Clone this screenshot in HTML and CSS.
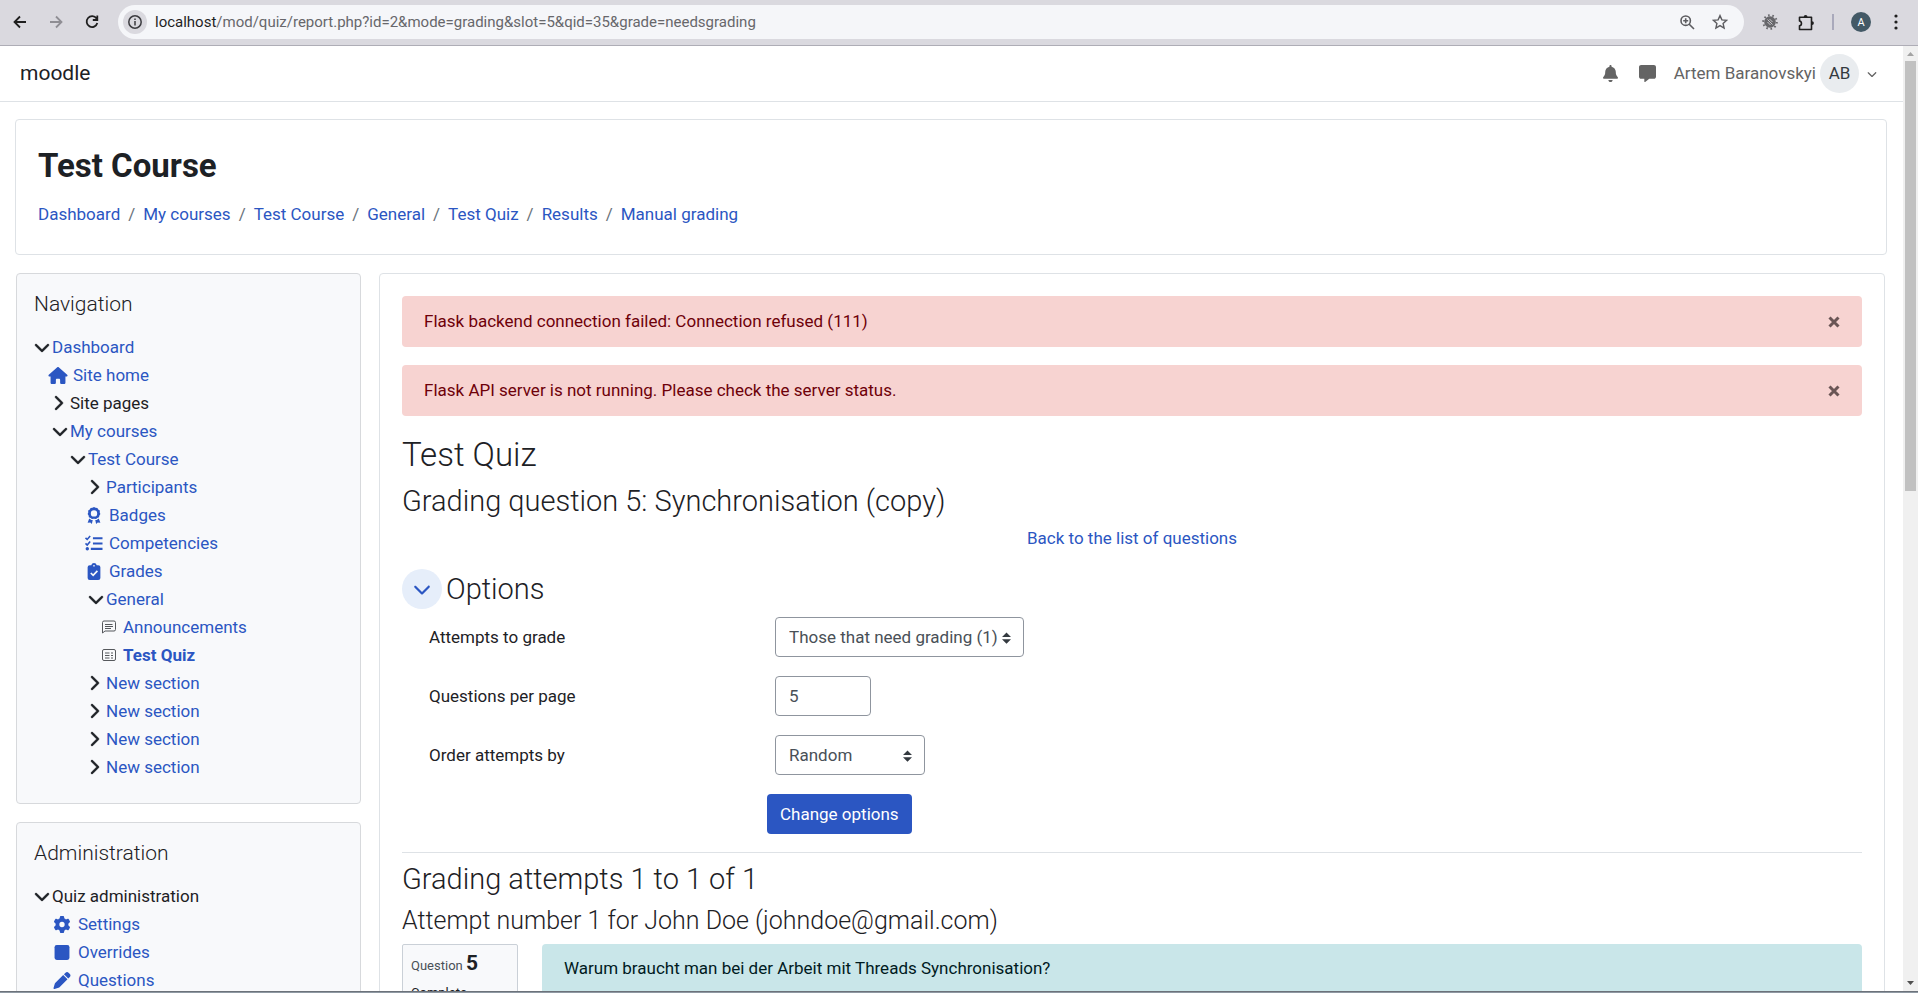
FILE: index.html
```html
<!DOCTYPE html>
<html lang="en">
<head>
<meta charset="utf-8">
<title>Test Quiz: Manual grading</title>
<link rel="stylesheet" href="styles.css">
</head>
<body>
<svg class="sprite" aria-hidden="true">
  <symbol id="down" viewBox="0 0 512 512"><path d="M233.4 406.6c12.5 12.5 32.8 12.5 45.3 0l192-192c12.5-12.5 12.5-32.8 0-45.3s-32.8-12.5-45.3 0L256 338.7 86.6 169.4c-12.5-12.5-32.8-12.5-45.3 0s-12.5 32.8 0 45.3l192 192z"/></symbol>
  <symbol id="right" viewBox="0 0 320 512"><path d="M310.6 233.4c12.5 12.5 12.5 32.8 0 45.3l-192 192c-12.5 12.5-32.8 12.5-45.3 0s-12.5-32.8 0-45.3L242.7 256 73.4 86.6c-12.5-12.5-12.5-32.8 0-45.3s32.8-12.5 45.3 0l192 192z"/></symbol>
  <symbol id="updown" viewBox="0 0 8 10"><path d="M4 0L8 4H0zM4 10L0 6h8z"/></symbol>
</svg>

<header class="toolbar">
  <button class="tool" aria-label="Back"><svg width="14" height="14" viewBox="0 0 14 14" fill="none" stroke="#1f1f1f" stroke-width="1.800"><path d="M13 7H2M7 1.500L1.500 7 7 12.500"/></svg></button>
  <button class="tool" aria-label="Forward"><svg width="14" height="14" viewBox="0 0 14 14" fill="none" stroke="#8f8e94" stroke-width="1.800"><path d="M1 7h11M7 1.500L12.500 7 7 12.500"/></svg></button>
  <button class="tool" aria-label="Reload"><svg width="14" height="14" viewBox="0 0 14 14" fill="none" stroke="#1f1f1f" stroke-width="1.800"><path d="M11.500 3.500A5.400 5.400 0 1 0 12.300 8M12.300 0.500v4.500h-4.500"/></svg></button>
  <div class="address">
    <button class="site-info" aria-label="View site information"><svg width="16" height="16" viewBox="0 0 16 16" fill="none" stroke="#3b3b3f" stroke-width="1.500"><circle cx="8" cy="8" r="6.200"/><path d="M8 7v4.500M8 4.500v1.500"/></svg></button>
    <div class="url" role="textbox" aria-label="Address"><span class="host">localhost</span>/mod/quiz/report.php?id=2&amp;mode=grading&amp;slot=5&amp;qid=35&amp;grade=needsgrading</div>
    <button class="tool-sm" aria-label="Zoom"><svg width="15" height="15" viewBox="0 0 15 15" fill="none" stroke="#5c5c60" stroke-width="1.600"><circle cx="5.700" cy="5.700" r="4.700"/><path d="M9 9l5 5M5.700 3.200v5M3.200 5.700h5"/></svg></button>
    <button class="tool-sm" aria-label="Bookmark"><svg width="16" height="16" viewBox="0 0 16 16" fill="none" stroke="#5c5c60" stroke-width="1.400"><path d="M8 1.600l1.900 4.300 4.700.4-3.500 3.100 1 4.600L8 11.600 3.900 14l1-4.600L1.400 6.300l4.700-.4z"/></svg></button>
  </div>
  <div class="extensions">
    <button class="tool-sm" aria-label="Extension"><svg width="16" height="16" viewBox="0 0 16 16"><circle cx="8" cy="8" r="5.800" fill="#67676b"/><circle cx="8" cy="8" r="6.800" fill="none" stroke="#67676b" stroke-width="2" stroke-dasharray="1.600 2.670"/><path d="M5.500 5.500l5 5M7.500 5l3 3M5.500 8l3 3" stroke="#c9c8cd" stroke-width="1"/></svg></button>
    <button class="tool-sm" aria-label="Extensions"><svg width="17" height="17" viewBox="0 0 17 17" fill="none" stroke="#1f1f1f" stroke-width="1.600"><path d="M1.500 3.300h12V15.500h-12v-3.700c2.600-.4 2.600-4.400 0-4.800z" stroke-linejoin="round"/><path d="M5.700 3a1.900 1.900 0 0 1 3.800 0zM14 7.200a1.900 1.900 0 0 1 0 3.800z" fill="#1f1f1f" stroke="none"/></svg></button>
    <span class="bar"></span>
    <button class="profile" aria-label="Profile A">A</button>
    <button class="tool-sm" aria-label="Menu"><svg width="4" height="16" viewBox="0 0 4 16" fill="#1f1f1f"><circle cx="2" cy="2" r="1.600"/><circle cx="2" cy="8" r="1.600"/><circle cx="2" cy="14" r="1.600"/></svg></button>
  </div>
</header>

<div class="viewport">
<div class="page">
  <nav class="navbar">
    <a class="brand" href="#">moodle</a>
    <div class="user">
      <button class="nav-icon" aria-label="Notifications"><svg width="15" height="17" viewBox="0 0 448 512" fill="#646464"><path d="M224 0c-17.700 0-32 14.300-32 32V51.200C119 66 64 130.600 64 208v18.800c0 47-17.300 92.400-48.500 127.600l-7.400 8.300c-8.400 9.400-10.400 22.900-5.300 34.400S19.400 416 32 416H416c12.600 0 24-7.400 29.200-18.900s3.100-25-5.300-34.400l-7.400-8.300C401.300 319.200 384 273.900 384 226.800V208c0-77.400-55-142-128-156.800V32c0-17.700-14.300-32-32-32zm45.300 493.300c12-12 18.700-28.300 18.700-45.300H224 160c0 17 6.700 33.300 18.700 45.300s28.300 18.700 45.300 18.700s33.300-6.700 45.300-18.700z"/></svg></button>
      <button class="nav-icon" aria-label="Messages"><svg width="17" height="17" viewBox="0 0 512 512" fill="#646464"><path d="M64 0C28.700 0 0 28.700 0 64V352c0 35.300 28.700 64 64 64h96v80c0 6.100 3.400 11.600 8.800 14.300s11.900 2.100 16.800-1.500L309.300 416H448c35.300 0 64-28.700 64-64V64c0-35.300-28.700-64-64-64H64z"/></svg></button>
      <button class="user-menu"><span>Artem Baranovskyi</span><span class="avatar">AB</span><svg width="10" height="10" viewBox="0 0 512 512" fill="#646464"><use href="#down"/></svg></button>
    </div>
  </nav>

  <section class="card page-header">
    <h1>Test Course</h1>
    <ol class="crumbs">
      <li><a href="#">Dashboard</a></li>
      <li><a href="#">My courses</a></li>
      <li><a href="#">Test Course</a></li>
      <li><a href="#">General</a></li>
      <li><a href="#">Test Quiz</a></li>
      <li><a href="#">Results</a></li>
      <li><a href="#">Manual grading</a></li>
    </ol>
  </section>

  <div class="columns">
    <aside class="sidebar">
      <section class="card block">
        <h5>Navigation</h5>
        <ul class="tree">
          <li><div class="row"><svg class="chev"><use href="#down"/></svg><a href="#">Dashboard</a></div>
            <ul>
              <li><div class="row leaf"><svg class="icon" viewBox="0 0 576 512"><path d="M575.800 255.500c0 18-15 32.100-32 32.100h-32l.7 160.200c0 2.700-.2 5.400-.5 8.100V472c0 22.100-17.900 40-40 40H392c-22.100 0-40-17.900-40-40V384c0-17.700-14.300-32-32-32H256c-17.700 0-32 14.300-32 32v88c0 22.100-17.900 40-40 40H104c-22.100 0-40-17.900-40-40V287.600H32c-18 0-32-14-32-32.100c0-9 3-17 10-24L266.400 8c7-7 15-8 22-8s15 2 21 7L564.800 231.500c8 7 12 15 11 24z"/></svg><a href="#">Site home</a></div></li>
              <li><div class="row"><svg class="chev side"><use href="#right"/></svg><span>Site pages</span></div></li>
              <li><div class="row"><svg class="chev"><use href="#down"/></svg><a href="#">My courses</a></div>
                <ul>
                  <li><div class="row"><svg class="chev"><use href="#down"/></svg><a href="#">Test Course</a></div>
                    <ul>
                      <li><div class="row"><svg class="chev side"><use href="#right"/></svg><a href="#">Participants</a></div></li>
                      <li><div class="row leaf"><svg class="icon" viewBox="0 0 16 16"><path fill-rule="evenodd" d="M8 0l1.500.8 1.700.1.800 1.500 1.500 1-.1 1.700.6 1.400-.9 1.500-.4 1.600-1.600.7L10 11.400 8 11l-2 .4-1.200-1.100-1.600-.7-.3-1.600L2 6.500l.6-1.400-.1-1.700 1.500-1 .8-1.500L6.500.8zM8 3a3 3 0 1 0 0 6 3 3 0 0 0 0-6z"/><path d="M3.500 10.800l2 1.400h1.300L6 16l-1.500-1.400-2.500.2zM12.500 10.800l-2 1.400H9.200L10 16l1.500-1.400 2.500.2z"/></svg><a href="#">Badges</a></div></li>
                      <li><div class="row leaf"><svg class="icon" viewBox="0 0 16 16"><path d="M0 2.700l1.600 1.500L4.400 1M0 7.900l1.600 1.500 2.800-3.200" fill="none" stroke="#2b56c2" stroke-width="1.500"/><path d="M7 2h9v2H7zM7 7h9v2H7zM5 12h11v2H5z"/><circle cx="1.700" cy="13" r="1.600"/></svg><a href="#">Competencies</a></div></li>
                      <li><div class="row leaf"><svg class="icon" viewBox="0 0 16 16"><path d="M4 2h1.400a2.700 2.700 0 0 1 5.200 0H12a2 2 0 0 1 2 2v10a2 2 0 0 1-2 2H4a2 2 0 0 1-2-2V4a2 2 0 0 1 2-2z"/><circle cx="8" cy="2.600" r=".8" fill="#f8f9fb"/><path d="M5 9.400l2.200 2.200L11.200 7.400" fill="none" stroke="#f8f9fb" stroke-width="1.600"/></svg><a href="#">Grades</a></div></li>
                      <li><div class="row"><svg class="chev"><use href="#down"/></svg><a href="#">General</a></div>
                        <ul>
                          <li><div class="row activity"><svg class="mod" viewBox="0 0 14 14"><path d="M.5 13V2.500a1.500 1.500 0 0 1 1.500-1.500h10a1.500 1.500 0 0 1 1.500 1.500v7a1.500 1.500 0 0 1-1.500 1.500H3zM3 4.500h7.500M3 6.500h8M3 8.500h6"/></svg><a href="#">Announcements</a></div></li>
                          <li><div class="row activity"><svg class="mod" viewBox="0 0 14 14"><rect x=".5" y="1.500" width="13" height="11" rx="1.500"/><path d="M3 5h4.500M3 7.500h4.500M3 10h4.500M9 5h2M9 7.500h2M9 10h2"/></svg><a class="current" href="#">Test Quiz</a></div></li>
                        </ul>
                      </li>
                      <li><div class="row"><svg class="chev side"><use href="#right"/></svg><a href="#">New section</a></div></li>
                      <li><div class="row"><svg class="chev side"><use href="#right"/></svg><a href="#">New section</a></div></li>
                      <li><div class="row"><svg class="chev side"><use href="#right"/></svg><a href="#">New section</a></div></li>
                      <li><div class="row"><svg class="chev side"><use href="#right"/></svg><a href="#">New section</a></div></li>
                    </ul>
                  </li>
                </ul>
              </li>
            </ul>
          </li>
        </ul>
      </section>
      <section class="card block">
        <h5>Administration</h5>
        <ul class="tree">
          <li><div class="row"><svg class="chev"><use href="#down"/></svg><span>Quiz administration</span></div>
            <ul>
              <li><div class="row setting"><svg class="icon" viewBox="0 0 512 512"><path d="M495.900 166.600c3.200 8.700 .5 18.400-6.400 24.600l-43.300 39.400c1.100 8.300 1.700 16.800 1.700 25.400s-.6 17.100-1.700 25.400l43.300 39.400c6.900 6.200 9.600 15.900 6.400 24.600c-4.400 11.900-9.700 23.300-15.800 34.300l-4.700 8.100c-6.600 11-14 21.400-22.100 31.200c-5.900 7.200-15.700 9.600-24.500 6.800l-55.700-17.700c-13.400 10.300-28.200 18.900-44 25.400l-12.500 57.100c-2 9.100-9 16.300-18.200 17.800c-13.800 2.300-28 3.500-42.500 3.500s-28.700-1.200-42.500-3.500c-9.200-1.500-16.200-8.700-18.200-17.800l-12.500-57.100c-15.800-6.500-30.600-15.100-44-25.400L83.100 425.900c-8.800 2.800-18.600 .3-24.500-6.800c-8.100-9.800-15.500-20.200-22.100-31.200l-4.700-8.100c-6.100-11-11.400-22.400-15.800-34.300c-3.200-8.700-.5-18.400 6.400-24.600l43.300-39.400C64.600 273.100 64 264.600 64 256s.6-17.100 1.700-25.400L22.400 191.200c-6.900-6.200-9.600-15.900-6.400-24.600c4.400-11.900 9.700-23.300 15.800-34.300l4.700-8.100c6.600-11 14-21.400 22.100-31.200c5.900-7.200 15.700-9.600 24.500-6.800l55.700 17.700c13.400-10.300 28.200-18.900 44-25.400l12.500-57.100c2-9.100 9-16.300 18.200-17.800C227.300 1.200 241.500 0 256 0s28.700 1.200 42.500 3.500c9.200 1.500 16.200 8.700 18.200 17.800l12.500 57.100c15.800 6.500 30.600 15.100 44 25.400l55.700-17.700c8.800-2.800 18.600-.3 24.500 6.800c8.100 9.800 15.500 20.200 22.100 31.200l4.700 8.100c6.100 11 11.400 22.400 15.800 34.300zM256 336a80 80 0 1 0 0-160 80 80 0 1 0 0 160z"/></svg><a href="#">Settings</a></div></li>
              <li><div class="row setting"><svg class="icon" viewBox="0 0 16 16"><rect x="1" y="1" width="14" height="14" rx="2"/></svg><a href="#">Overrides</a></div></li>
              <li><div class="row setting"><svg class="icon" viewBox="0 0 512 512"><path d="M362.700 19.300L314.300 67.700 444.300 197.700l48.400-48.400c25-25 25-65.500 0-90.500L453.300 19.300c-25-25-65.500-25-90.500 0zm-71 71L58.600 323.500c-10.400 10.400-18 23.300-22.200 37.400L1 481.200C-1.500 489.700 .8 498.800 7 505s15.300 8.500 23.700 6.100l120.300-35.400c14.100-4.200 27-11.800 37.400-22.200L421.700 220.300 291.700 90.300z"/></svg><a href="#">Questions</a></div></li>
            </ul>
          </li>
        </ul>
      </section>
    </aside>

    <main class="card main">
      <div class="alert" role="alert"><span>Flask backend connection failed: Connection refused (111)</span><button class="close" aria-label="Dismiss"><svg width="12" height="12" viewBox="0 0 12 12"><path d="M1.500 1.500l9 9M10.500 1.500l-9 9"/></svg></button></div>
      <div class="alert" role="alert"><span>Flask API server is not running. Please check the server status.</span><button class="close" aria-label="Dismiss"><svg width="12" height="12" viewBox="0 0 12 12"><path d="M1.500 1.500l9 9M10.500 1.500l-9 9"/></svg></button></div>
      <h2>Test Quiz</h2>
      <h3>Grading question 5: Synchronisation (copy)</h3>
      <p class="back"><a href="#">Back to the list of questions</a></p>
      <form class="options">
        <div class="legend"><button type="button" class="toggle" aria-label="Collapse options"><svg width="18" height="18" viewBox="0 0 512 512"><use href="#down"/></svg></button><h3>Options</h3></div>
        <div class="field"><label for="attempts">Attempts to grade</label><div class="control"><span class="select"><select id="attempts"><option>Those that need grading (1)</option></select><svg class="caret"><use href="#updown"/></svg></span></div></div>
        <div class="field"><label for="pagesize">Questions per page</label><div class="control"><input id="pagesize" type="text" value="5"></div></div>
        <div class="field"><label for="order">Order attempts by</label><div class="control"><span class="select short"><select id="order"><option>Random</option></select><svg class="caret"><use href="#updown"/></svg></span></div></div>
        <div class="submit"><button type="button" class="primary">Change options</button></div>
      </form>
      <hr>
      <h3>Grading attempts 1 to 1 of 1</h3>
      <h4>Attempt number 1 for John Doe (johndoe@gmail.com)</h4>
      <div class="question">
        <div class="info"><div class="number">Question <b>5</b></div><div class="state">Complete</div></div>
        <div class="formulation">Warum braucht man bei der Arbeit mit Threads Synchronisation?</div>
      </div>
    </main>
  </div>
</div>
<div class="scrollbar" aria-hidden="true">
  <svg width="7" height="4" viewBox="0 0 7 4" fill="#a3a3a3"><path d="M0 4L3.500 0 7 4z"/></svg>
  <div class="track"><div class="thumb"></div></div>
  <svg width="7" height="4" viewBox="0 0 7 4" fill="#505050"><path d="M0 0L3.500 4 7 0z"/></svg>
</div>
</div>
<div class="edge"></div>
</body>
</html>
```

FILE: styles.css
```css
* { box-sizing: border-box; }
body {
  margin: 0;
  height: 100vh;
  display: flex;
  flex-direction: column;
  overflow: hidden;
  background: #fff;
  color: #1d2125;
  font-family: Roboto, "Liberation Sans", sans-serif;
  font-size: 17px;
  line-height: 25px;
}
button, input, select { font: inherit; color: inherit; }
button { padding: 0; border: 0; background: none; display: flex; align-items: center; justify-content: center; }
a { color: #2b56c2; text-decoration: none; }
h1, h2, h3, h4, h5, p, ul, ol { margin: 0; padding: 0; }
ul, ol { list-style: none; }
svg { flex: none; display: block; }
.sprite { position: absolute; width: 0; height: 0; }

/* Browser toolbar */
.toolbar {
  flex: none;
  height: 46px;
  display: flex;
  align-items: center;
  padding: 0 20px 1px 13px;
  background: #dad9df;
  border-bottom: 1px solid #aeadb6;
}
.tool { width: 14px; margin-right: 22px; }
.address {
  flex: 1;
  height: 34px;
  display: flex;
  align-items: center;
  margin-right: 18px;
  padding: 0 16px 0 5px;
  border-radius: 17px;
  background: #f5f6f9;
}
.tool + .address { margin-left: -3px; }
.site-info { width: 24px; height: 24px; border-radius: 50%; background: #dad9df; }
.url { flex: 1; margin-left: 8px; font-size: 15px; color: #67676b; white-space: nowrap; }
.host { color: #1f1f1f; }
.address .tool-sm + .tool-sm { margin-left: 17px; }
.extensions { display: flex; align-items: center; gap: 17px; }
.extensions .tool-sm:nth-child(2) { margin-left: 3px; }
.bar { width: 2px; height: 16px; background: #a9a9bb; }
.profile { width: 20px; height: 20px; border-radius: 50%; background: #435966; color: #fff; font-size: 11px; }
.profile + .tool-sm { margin-left: 6px; }

/* Page viewport */
.viewport { flex: 1; min-height: 0; display: flex; }
.page { flex: 1; min-width: 0; overflow: hidden; }
.scrollbar {
  flex: none;
  width: 15px;
  display: flex;
  flex-direction: column;
  align-items: center;
  padding: 6px 0;
  background: #f0f0f0;
}
.track { flex: 1; width: 11px; padding: 5px 0; }
.thumb { height: 47%; background: #c1c1c1; }
.edge { flex: none; height: 2px; background: #8f99a3; border-top: 1px solid #6c727a; }

.navbar {
  height: 56px;
  display: flex;
  align-items: center;
  justify-content: space-between;
  padding: 0 26px 0 20px;
  border-bottom: 1px solid #dee2e6;
}
.brand { font-size: 21px; color: #1d2125; }
.user { display: flex; align-items: center; }
.nav-icon { width: 17px; margin-right: 20px; }
.nav-icon + .user-menu { margin-left: -2px; }
.user-menu { gap: 4px; color: #646464; }
.avatar { width: 39px; height: 39px; margin-right: 4px; border-radius: 50%; background: #e9ecef; color: #343a40; line-height: 39px; text-align: center; }

.card { border: 1px solid #dee2e6; border-radius: 4px; }
.page-header { margin: 17px 16px 0 15px; padding: 26px 22px 27px; }
h1 { font-size: 33px; line-height: 40px; font-weight: 700; }
.crumbs { display: flex; margin-top: 16px; }
.crumbs li + li::before { content: "/"; padding: 0 8px; color: #6a737b; }

.columns { display: grid; grid-template-columns: 345px 1fr; gap: 18px; padding: 18px 18px 0 16px; align-items: start; }
.sidebar { display: grid; gap: 18px; }
.block { padding: 18px 17px 22px; background: #f8f9fb; border-color: #d7d9dc; }
h5 { font-size: 21px; line-height: 25px; font-weight: 300; margin-bottom: 16px; }
.tree { line-height: 28px; }
.tree ul { padding-left: 18px; }
.row { display: flex; align-items: center; height: 28px; white-space: nowrap; }
.chev { width: 16px; height: 16px; margin-right: 2px; fill: #1d2125; stroke: #1d2125; stroke-width: 14; }
.side { width: 12px; margin-right: 6px; }
.leaf, .activity { margin-left: -4px; }
.icon { width: 20px; height: 17px; margin-right: 5px; fill: #2b56c2; }
.setting .icon { margin-right: 6px; }
.mod { width: 14px; height: 14px; margin-right: 7px; fill: none; stroke: #55585c; }
.current { font-weight: 700; }

.main { padding: 22px; }
.alert {
  display: flex;
  align-items: center;
  justify-content: space-between;
  margin-bottom: 18px;
  padding: 13px 22px;
  border-radius: 4px;
  background: #f7d3d1;
  color: #6e0009;
}
.close svg { fill: none; stroke: #6a5555; stroke-width: 3; }
h2 { font-size: 33px; line-height: 42px; font-weight: 300; margin-bottom: 8px; }
h3 { font-size: 29px; line-height: 35px; font-weight: 300; }
h4 { font-size: 25px; line-height: 30px; font-weight: 300; }
.back { margin-top: 7px; text-align: center; }
.legend { display: flex; align-items: center; gap: 4px; margin: 18px 0 8px; }
.toggle { width: 40px; height: 40px; border-radius: 50%; background: #e6eefa; }
.toggle svg { fill: #2b56c2; }
.field { display: grid; grid-template-columns: 25% 1fr; align-items: center; margin-bottom: 19px; }
.field label { padding-left: 27px; }
.control { display: flex; padding-left: 8px; }
.select { position: relative; width: 249px; }
.short { width: 150px; }
select, input { width: 100%; height: 40px; padding: 0 13px; border: 1px solid #8f959e; border-radius: 4px; background: #fff; color: #495057; appearance: none; }
input { width: 96px; }
.caret { position: absolute; right: 13px; top: 15px; width: 9px; height: 12px; fill: #343a40; pointer-events: none; }
.submit { padding-left: 25%; }
.primary { height: 40px; padding: 0 13px; border-radius: 4px; background: #2b56c2; color: #fff; }
hr { margin: 18px 0 9px; border: 0; border-top: 1px solid #dee2e6; }
hr + h3 { margin-bottom: 9px; }
.question { display: flex; align-items: stretch; gap: 24px; margin-top: 8px; }
.info { width: 116px; padding: 6px 8px 8px; border: 1px solid #cad0d7; border-radius: 2px; background: #f8f9fb; font-size: 13px; }
.number { color: #495057; }
.number b { font-size: 21px; color: #1d2125; }
.state { margin-top: 2px; }
.formulation { flex: 1; padding: 12px 22px 50px; border-radius: 4px; background: #c9e6e9; color: #001a1e; }
```
